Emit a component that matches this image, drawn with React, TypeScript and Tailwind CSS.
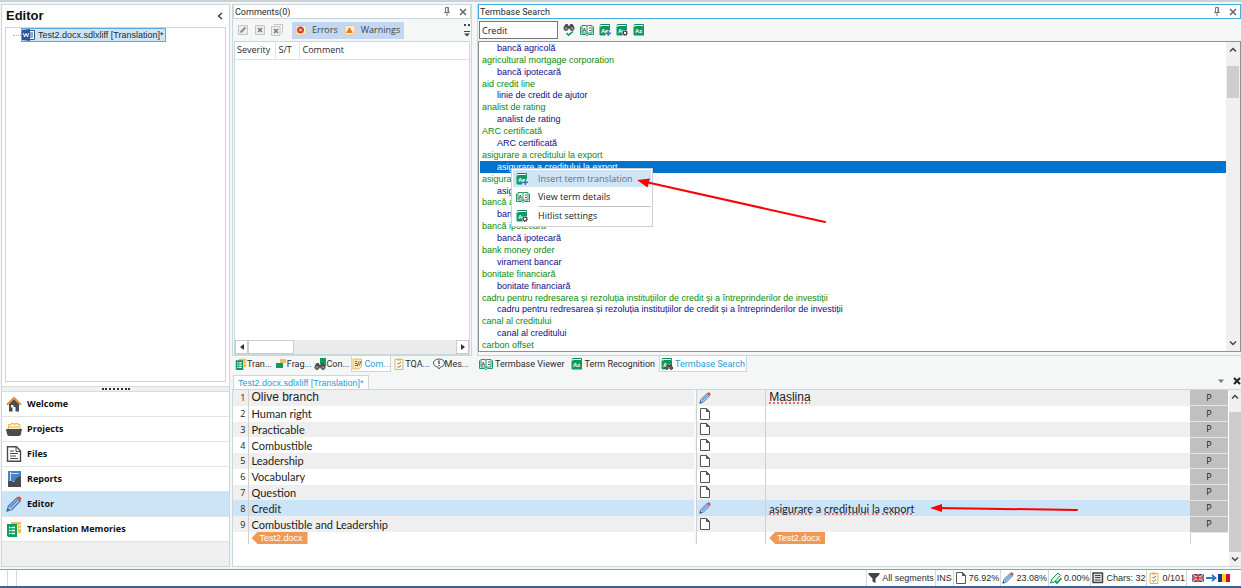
import React from 'react';

type IconProps = { className?: string };

const Pencil = ({ className = 'w-3 h-3' }: IconProps) => (
  <svg viewBox="0 0 16 16" className={className} fill="none">
    <path d="M1 15l1.5-5L11 1.8l3.2 3.2L5.8 13.5z" fill="#b9d2ec" stroke="#3f79bd" strokeWidth="1.3" />
    <path d="M4 11.5L12 3.6" stroke="#3f79bd" strokeWidth="1.3" />
    <path d="M10.6 2.2L12.4.6Q13.5 0 14.6 1.3 16 2.6 15.3 3.6L13.8 5.4z" fill="#d9534a" />
    <path d="M1 15l.8-2.6L3.6 14z" fill="#444" />
  </svg>
);

const Page = ({ className = 'w-3 h-3' }: IconProps) => (
  <svg viewBox="0 0 12 12" className={className} fill="#fff" stroke="#555" strokeWidth="1">
    <path d="M1.5.5h6l3 3v8h-9z" />
    <path d="M7.5.5v3h3z" fill="#555" />
  </svg>
);

const OpenBook = ({ className = 'w-[14px] h-3' }: IconProps) => (
  <svg viewBox="0 0 14 12" className={className} fill="none" stroke="#1b9a63">
    <path d="M.5 2.5v8h5l1.5 1 1.5-1h5v-8" />
    <path d="M2 1.500h4l1 .5 1-.5h4V9H8L7 9.500 6 9H2zM7 2v8" fill="#fff" />
    <path d="M9 4h2M9 6.500h2" stroke="#555" />
    <text x="2.500" y="7.500" fontSize="5" fontWeight="bold" fill="#333" stroke="none" fontFamily="Liberation Sans, sans-serif">A</text>
  </svg>
);

const TermBook = ({ className = 'w-3 h-3', badge }: IconProps & { badge?: 'plus' | 'gear' | 'find' }) => (
  <svg viewBox="0 0 12 12" className={className} fill="none">
    <path d="M1 1.500Q1 .5 2 .5h8.500v2H2.500" stroke="#0c8a55" fill="#fff" />
    <path d="M.5 2.500h10.500v9h-9.500q-1 0-1-1z" fill="#0f9a60" />
    <text x="2" y="9" fontSize="6" fontWeight="bold" fill="#fff" fontFamily="Liberation Sans, sans-serif">Az</text>
    {badge === 'plus' && (
      <g>
        <rect x="6.500" y="6.500" width="5.500" height="5.500" fill="#fff" />
        <path d="M6.500 9.300h5.500M9.300 6.500V12" stroke="#3b74bd" strokeWidth="1.700" />
      </g>
    )}
    {badge === 'gear' && (
      <g>
        <circle cx="9" cy="9" r="3" fill="#fff" />
        <circle cx="9" cy="9" r="1.800" stroke="#444" strokeWidth="1.300" />
        <circle cx="9" cy="9" r="2.600" stroke="#444" strokeWidth=".8" strokeDasharray="1 1" />
      </g>
    )}
    {badge === 'find' && (
      <g>
        <path d="M4 8h8v4H4z" fill="#fff" />
        <path d="M5.500 8l1-1h1v1.500h1.500V7h1l1 1" stroke="#444" strokeWidth="1.200" />
        <circle cx="5.800" cy="10" r="1.400" fill="#777" stroke="#333" />
        <circle cx="10.200" cy="10" r="1.400" fill="#777" stroke="#333" />
      </g>
    )}
  </svg>
);

const Binoculars = ({ className = 'w-3 h-3', tick, book }: IconProps & { tick?: boolean; book?: boolean }) => (
  <svg viewBox="0 0 12 12" className={className} fill="none">
    {book && <path d="M6 0h6v8H8.500L6 5.500z" fill="#0f9a60" />}
    <g transform={tick ? 'translate(0 -1)' : 'translate(0 4)'}>
      <path d="M1 3.500L2.500 1h2.500v1.500h2V1h2.500L11 3.500v2H1z" fill="#555" />
      <circle cx="3" cy="5.300" r="2.100" fill="#888" stroke="#3d3d3d" />
      <circle cx="9" cy="5.300" r="2.100" fill="#888" stroke="#3d3d3d" />
    </g>
    {tick && <path d="M3.500 9l2 2.200L10 7.500" stroke="#0f9a60" strokeWidth="1.600" />}
  </svg>
);

const Memories = ({ className = 'w-3 h-3' }: IconProps) => (
  <svg viewBox="0 0 16 16" className={className} fill="none">
    <path d="M5 1h10v11h-3V4H5z" fill="#efbf55" />
    <path d="M13 4h2M13 7.500h2" stroke="#fff" />
    <path d="M1 3h10v13H3q-2 0-2-2z" fill="#0f9a60" />
    <path d="M3 6.500h6M3 9.500h6M3 12.500h6" stroke="#fff" strokeWidth="1.500" />
    <path d="M5 5v10" stroke="#0f9a60" />
  </svg>
);

const Fragments = () => (
  <svg viewBox="0 0 12 12" className="w-3 h-3">
    <path d="M5 1h6v4H5z" fill="#efbf55" />
    <path d="M1 5h7v5H1z" fill="#0f9a60" />
  </svg>
);

const Note = () => (
  <svg viewBox="0 0 12 12" className="w-3 h-3" fill="none">
    <path d="M1 1h8.500v7.500L7 11H1z" fill="#fbe6b0" stroke="#e7bd5a" />
    <path d="M3 3.500h2M3 5.500h2M3 7.500h3M7 3.500L5.500 7M9.500 3L7 7.500" stroke="#666" />
  </svg>
);

const Clip = () => (
  <svg viewBox="0 0 12 12" className="w-3 h-3" fill="none">
    <path d="M2 1.500h8v10H2z" fill="#fff7e2" stroke="#e5b654" />
    <path d="M4 .5h4v2H4z" fill="#e5b654" />
    <path d="M4.500 5l1 1 2.500-2M4.500 8.500l1 1L8 7.500" stroke="#4a6fa8" />
  </svg>
);

const Message = () => (
  <svg viewBox="0 0 12 12" className="w-3 h-3" fill="none" stroke="#555">
    <path d="M6 1C9 1 11.500 2.500 11.500 5S9 9 7.500 9L6 11 4.800 9C2.500 8.800.5 7.300.5 5s2.500-4 5.500-4z" />
    <path d="M6 2.500v3.500M6 7v1" stroke="#333" strokeWidth="1.200" />
  </svg>
);

const Chevron = ({ dir }: { dir: 'up' | 'down' }) => (
  <svg viewBox="0 0 8 8" className="w-2 h-2" fill="none" stroke="#444" strokeWidth="1.500">
    <path d={dir === 'up' ? 'M1 5.500l3-3 3 3' : 'M1 2.500l3 3 3-3'} />
  </svg>
);

const Pin = () => (
  <svg viewBox="0 0 8 9" className="w-2 h-[9px]" fill="none" stroke="#777">
    <path d="M2.500 5V.5h3V5M5 .5V5M1 5.500h6M4 5.500V9" />
  </svg>
);

const Close = ({ bold }: { bold?: boolean }) => (
  <svg viewBox="0 0 8 8" className="w-2 h-2" fill="none" stroke={bold ? '#222' : '#666'} strokeWidth={bold ? 2 : 1.5}>
    <path d="M1 1l6 6M7 1L1 7" />
  </svg>
);

const navItems = [
  {
    label: 'Welcome',
    icon: (
      <svg viewBox="0 0 16 16" className="w-4 h-4" fill="none">
        <path d="M3 8l5-5 5 5v7.500H9.500V11h-3v4.500H3z" fill="#4b4b4b" />
        <path d="M1 8.800L8 1.800l7 7" stroke="#ec8b3d" strokeWidth="2" />
        <path d="M5 9h2.500v2.500H5z" fill="#fff" />
      </svg>
    ),
  },
  {
    label: 'Projects',
    icon: (
      <svg viewBox="0 0 16 16" className="w-4 h-4" fill="none">
        <path d="M2.500 8V3.500H5v-1h3v1h1v-1h3v1h2V8" fill="#fdf1d2" stroke="#eab951" />
        <path d="M3 6h10" stroke="#eab951" />
        <path d="M0 8h16l-1 5q-.5 2-2 2H3q-1.500 0-2-2z" fill="#4b4b4b" />
      </svg>
    ),
  },
  {
    label: 'Files',
    icon: (
      <svg viewBox="0 0 16 16" className="w-4 h-4" fill="none" stroke="#4b4b4b">
        <path d="M1.500.8h9L14.500 5v10.200h-13z" fill="#fff" strokeWidth="1.400" />
        <path d="M10 1v4.500h4" />
        <path d="M4 5h4M4 7.500h8M4 10h6M4 12.500h8" strokeWidth="1.200" />
      </svg>
    ),
  },
  {
    label: 'Reports',
    icon: (
      <svg viewBox="0 0 16 16" className="w-4 h-4" fill="none">
        <path d="M2 0h13v10H2z" fill="#4a83c4" />
        <path d="M4.500 1v9M4.500 2.500h8" stroke="#cfe0f2" />
        <path d="M2 10h4q1 1.500 3 0 1-4 6-5v11H2z" fill="#4b4b4b" />
      </svg>
    ),
  },
  { label: 'Editor', icon: <Pencil className="w-4 h-4" /> },
  { label: 'Translation Memories', icon: <Memories className="w-4 h-4" /> },
];

const terms = [
  'bancă agricolă',
  'agricultural mortgage corporation',
  'bancă ipotecară',
  'aid credit line',
  'linie de credit de ajutor',
  'analist de rating',
  'analist de rating',
  'ARC certificată',
  'ARC certificată',
  'asigurare a creditului la export',
  'asigurare a creditului la export',
  'asigurare a creditului',
  'asigurare a creditului',
  'bancă agricolă',
  'bancă agricolă',
  'bancă ipotecară',
  'bancă ipotecară',
  'bank money order',
  'virament bancar',
  'bonitate financiară',
  'bonitate financiară',
  'cadru pentru redresarea și rezoluția instituțiilor de credit și a întreprinderilor de investiții',
  'cadru pentru redresarea și rezoluția instituțiilor de credit și a întreprinderilor de investiții',
  'canal al creditului',
  'canal al creditului',
  'carbon offset',
];
const selectedTerm = 10;

const segments = [
  { source: 'Olive branch', target: 'Maslina', arial: true },
  { source: 'Human right' },
  { source: 'Practicable' },
  { source: 'Combustible' },
  { source: 'Leadership' },
  { source: 'Vocabulary' },
  { source: 'Question' },
  { source: 'Credit', target: 'asigurare a creditului la export', active: true },
  { source: 'Combustible and Leadership' },
];

const leftTabs = [
  { label: 'Tran...', icon: <Memories /> },
  { label: 'Frag...', icon: <Fragments /> },
  { label: 'Con...', icon: <Binoculars book /> },
  { label: 'Com...', icon: <Note />, active: true },
  { label: 'TQA...', icon: <Clip /> },
  { label: 'Mes...', icon: <Message /> },
];

const rightTabs = [
  { label: 'Termbase Viewer', icon: <OpenBook /> },
  { label: 'Term Recognition', icon: <TermBook /> },
  { label: 'Termbase Search', icon: <TermBook badge="find" />, active: true },
];

const Sidebar = () => (
  <aside className="w-[229px] shrink-0 flex flex-col border border-[#c9d8dd] bg-white">
    <div className="flex items-center justify-between h-[22px] pl-1 pr-[5px]">
      <h1 className="text-[13px] leading-4 font-bold text-[#111] font-['Liberation_Sans',sans-serif]">Editor</h1>
      <button aria-label="Collapse" className="w-2 h-2">
        <svg viewBox="0 0 8 8" className="w-2 h-2" fill="none" stroke="#333" strokeWidth="1.300">
          <path d="M6 1L2.500 4 6 7" />
        </svg>
      </button>
    </div>
    <div className="flex-1 mx-[3px] mb-1 border border-[#c9d8dd] pl-[7px]">
      <div className="flex items-center">
        <span className="w-2 border-t border-dotted border-[#aaa]" />
        <span className="flex items-center gap-[3px] h-[14px] pr-px border border-[#5ba7dc] bg-[#cde5f7] font-['Liberation_Sans',sans-serif] whitespace-nowrap">
          <svg viewBox="0 0 13 12" className="w-[13px] h-3">
            <path d="M6 1.500h6.500v9H6z" fill="#fff" stroke="#2b579a" />
            <path d="M8 4h3M8 6h3M8 8h3" stroke="#2b579a" />
            <path d="M0 1l8-1v12l-8-1z" fill="#2b579a" />
            <path d="M1.500 4l1 4 1.500-3.500L5.500 8l1-4" stroke="#fff" fill="none" />
          </svg>
          Test2.docx.sdlxliff [Translation]*
        </span>
      </div>
    </div>
    <div className="h-[6px] flex items-center justify-center bg-[#f0f0f0] border-y border-[#d5dfe2]">
      <span className="w-7 border-t-2 border-dotted border-[#333]" />
    </div>
    <nav className="bg-white">
      {navItems.map(item => (
        <button
          key={item.label}
          className={`flex items-center gap-[5px] w-full h-[25px] pl-1 border-b border-[#e4e4e4] font-bold text-[#111] ${item.label === 'Editor' ? 'bg-[#cce4f7]' : 'bg-white'}`}
        >
          {item.icon}
          {item.label}
        </button>
      ))}
    </nav>
    <div className="h-6 bg-[#efefef]" />
  </aside>
);

const PanelTitle = ({ title, active }: { title: string; active?: boolean }) => (
  <div className={`flex items-center gap-2 h-[15px] pl-px pr-[3px] bg-white border ${active ? 'border-[#45aede]' : 'border-[#c9d8dd]'}`}>
    <h2 className="flex-1 font-['Roboto',sans-serif]">{title}</h2>
    <button aria-label={`Pin ${title}`}><Pin /></button>
    <button aria-label={`Close ${title}`}><Close /></button>
  </div>
);

const Tabs = ({ tabs, tight }: { tabs: { label: string; icon: React.ReactNode; active?: boolean }[]; tight?: boolean }) => (
  <>
    {tabs.map(tab => (
      <button
        key={tab.label}
        className={`flex items-center h-4 border border-t-0 whitespace-nowrap font-['Roboto',sans-serif] ${tight ? '' : 'gap-[2px] px-px'} ${tab.active ? 'bg-white border-[#c9d8dd] text-[#1e9bd7]' : 'border-transparent'}`}
      >
        {tab.icon}
        {tab.label}
      </button>
    ))}
  </>
);

const CommentsPanel = () => (
  <section className="w-[240px] shrink-0 flex flex-col border-x border-b border-[#c9d8dd]">
    <PanelTitle title="Comments(0)" />
    <div className="flex items-center h-[22px] pl-1">
      <div className="flex items-center gap-1 pr-1">
        <button aria-label="Edit comment" className="w-[13px] h-3">
          <svg viewBox="0 0 12 12" className="w-3 h-3" fill="none" stroke="#c4c4c4">
            <path d="M1.500 1.500h9v9h-9z" fill="#eee" />
            <path d="M3.500 8.500l5-5" stroke="#888" strokeWidth="2" />
          </svg>
        </button>
        <button aria-label="Delete comment" className="w-[13px] h-3">
          <svg viewBox="0 0 12 12" className="w-3 h-3" fill="none" stroke="#c4c4c4">
            <path d="M1.500 1.500h9v9h-9z" fill="#eee" />
            <path d="M4 4l4 4M8 4L4 8" stroke="#777" strokeWidth="1.500" />
          </svg>
        </button>
        <button aria-label="Delete all comments" className="w-[13px] h-3">
          <svg viewBox="0 0 12 12" className="w-3 h-3" fill="none" stroke="#c4c4c4">
            <path d="M3 .5h8.500V9" />
            <path d="M.5 2.500h8.500v9H.5z" fill="#eee" />
            <path d="M3 5l4 4M7 5L3 9" stroke="#777" strokeWidth="1.500" />
          </svg>
        </button>
      </div>
      <div className="flex items-center h-[17px] pl-[3px] pr-1 ml-1 bg-[#c3d6f2] text-[#444]">
        <button className="flex items-center gap-[5px]">
          <svg viewBox="0 0 12 12" className="w-3 h-3">
            <path d="M1 1.500h10v7L8.500 11H1z" fill="#fdf0d0" stroke="#ecc77a" />
            <circle cx="5.500" cy="6" r="3.500" fill="#d23b34" />
            <path d="M4.200 4.700l2.600 2.600M6.800 4.700L4.200 7.300" stroke="#fff" />
          </svg>
          Errors
        </button>
        <button className="flex items-center gap-[5px] ml-[6px]">
          <svg viewBox="0 0 12 12" className="w-3 h-3">
            <path d="M1 1.500h10v7L8.500 11H1z" fill="#fdf0d0" stroke="#ecc77a" />
            <path d="M5.500 3L9 9H2z" fill="#ee7623" />
          </svg>
          Warnings
        </button>
      </div>
      <svg viewBox="0 0 6 14" className="w-[6px] h-[14px] ml-auto mr-px" fill="#444">
        <path d="M0 1h2v2H0zM4 1h2v2H4zM0 8h6v1H0zM0 10.500h6L3 13.500z" />
      </svg>
    </div>
    <div className="flex-1 flex flex-col mx-px border border-[#c9d8dd] bg-white">
      <table className="w-full table-fixed">
        <thead>
          <tr className="h-[17px] text-left border-b border-[#e3e3e3]">
            <th className="w-10 p-0 pl-[2px] font-normal border-r border-[#e3e3e3]">Severity</th>
            <th className="w-6 p-0 pl-[3px] font-normal border-r border-[#e3e3e3]">S/T</th>
            <th className="p-0 pl-[3px] font-normal">Comment</th>
          </tr>
        </thead>
      </table>
      <div className="flex-1" />
      <div className="flex h-[14px] bg-[#ebebeb]">
        <button aria-label="Scroll left" className="flex items-center justify-center w-[13px] bg-white border border-[#ccc]">
          <svg viewBox="0 0 6 6" className="w-[6px] h-[6px]"><path d="M5 0v6L1 3z" fill="#333" /></svg>
        </button>
        <span className="w-[46px] bg-white border border-[#ccc]" />
        <button aria-label="Scroll right" className="flex items-center justify-center w-[13px] ml-auto bg-white border border-[#ccc]">
          <svg viewBox="0 0 6 6" className="w-[6px] h-[6px]"><path d="M1 0v6l4-3z" fill="#333" /></svg>
        </button>
      </div>
    </div>
  </section>
);

const ContextMenu = () => (
  <div className="absolute left-8 top-[126px]">
    <ul role="menu" className="w-[142px] bg-white border border-[#cfcfcf] p-px text-[#222]">
      <li>
        <button role="menuitem" className="flex items-center gap-2 w-full h-[17px] pl-[3px] bg-[#cde5f7] text-[#6a6f74]">
          <span className="w-[14px]"><TermBook badge="plus" /></span>
          Insert term translation
        </button>
      </li>
      <li>
        <button role="menuitem" className="flex items-center gap-2 w-full h-[19px] pl-[3px]">
          <span className="w-[14px]"><OpenBook /></span>
          View term details
        </button>
      </li>
      <li className="ml-[25px] border-t border-[#c4c4c4]" />
      <li>
        <button role="menuitem" className="flex items-center gap-2 w-full h-[18px] pl-[3px]">
          <span className="w-[14px]"><TermBook badge="gear" /></span>
          Hitlist settings
        </button>
      </li>
    </ul>
    <svg viewBox="0 0 190 50" className="absolute left-[126px] top-2 w-[190px] h-[50px]" fill="#f00">
      <path d="M11 6.500L188 46" stroke="#f00" strokeWidth="2" strokeLinecap="round" />
      <path d="M0 4l13-1.500-2.500 9z" />
    </svg>
  </div>
);

const TermbasePanel = () => (
  <section className="flex-1 min-w-0 flex flex-col border-l border-b border-[#c9d8dd]">
    <PanelTitle title="Termbase Search" active />
    <div className="flex items-center gap-[5px] h-[22px] pl-px">
      <input
        aria-label="Search term"
        defaultValue="Credit"
        className="w-[79px] h-[18px] px-[2px] bg-white border border-[#777] text-[#222]"
      />
      <button aria-label="Search"><Binoculars tick /></button>
      <button aria-label="View term details"><OpenBook /></button>
      <button aria-label="Insert term translation"><TermBook badge="plus" /></button>
      <button aria-label="Hitlist settings"><TermBook badge="gear" /></button>
      <button aria-label="Open termbase"><TermBook /></button>
    </div>
    <div className="relative flex mb-[3px] border border-[#8d9296] bg-white">
      <ul className="flex-1 min-w-0 grid auto-rows-fr h-[309px] pl-px font-['Liberation_Sans',sans-serif] leading-[11px]">
        {terms.map((term, i) => (
          <li
            key={i}
            className={`flex items-center min-h-0 pt-px overflow-hidden whitespace-nowrap ${i % 2 ? 'pl-[2px] text-[#0a8a0a]' : 'pl-[17px]'} ${i === selectedTerm ? 'bg-[#0073d0] text-white' : i % 2 ? '' : 'text-[#0c0c8c]'}`}
          >
            {term}
          </li>
        ))}
      </ul>
      <div className="flex flex-col items-center w-[14px] py-1 bg-[#f0f0f0]">
        <Chevron dir="up" />
        <span className="w-3 h-8 mt-3 bg-[#cdcdcd]" />
        <span className="flex-1" />
        <Chevron dir="down" />
      </div>
      <ContextMenu />
    </div>
  </section>
);

const FileTag = () => (
  <span className="flex items-center w-14 h-3 pl-2 bg-[#ee9a56] text-white font-['Liberation_Sans',sans-serif] [clip-path:polygon(0_50%,6px_0,100%_0,100%_100%,6px_100%)]">
    Test2.docx
  </span>
);

const EditorGrid = () => (
  <div className="flex-1 flex min-h-0 border border-r-0 border-[#c9d8dd] bg-white">
    <div className="flex-1 min-w-0">
      <table className="w-full h-[154px] table-fixed text-[11px] leading-[15px] font-['Lato',sans-serif] text-[#1c1c1c]">
        <colgroup>
          <col className="w-[15px]" />
          <col className="w-[44.8%]" />
          <col className="w-[3px]" />
          <col className="w-[69px]" />
          <col />
          <col className="w-[38px]" />
        </colgroup>
        <tbody>
          {segments.map((s, i) => (
            <tr key={i} className={s.active ? 'bg-[#cce4f7]' : i % 2 ? 'bg-white' : 'bg-[#efefef]'}>
              <td className="p-0 pr-[2px] text-right text-[9px] border-r border-[#d0d0d0] font-['Open_Sans',sans-serif]">{i + 1}</td>
              <td className={`p-0 pl-[3px] ${s.arial ? "text-[12px] font-['Liberation_Sans',sans-serif]" : ''}`}>{s.source}</td>
              <td className="p-0 bg-[#f8f8f8] border-r border-[#d0d0d0]" />
              <td className="p-0 pl-[2px] border-r border-[#d0d0d0]">{s.target ? <Pencil /> : <Page />}</td>
              <td className={`p-0 pl-[3px] ${s.arial ? "text-[12px] font-['Liberation_Sans',sans-serif]" : ''}`}>
                {s.target && (
                  <span className="flex items-center gap-4">
                    <span>
                      {s.target.split(' ').map((word, w) => (
                        <React.Fragment key={w}>
                          {w > 0 && ' '}
                          <span className={word === 'a' ? '' : 'underline decoration-dotted decoration-2 underline-offset-1 decoration-[#ee6a6a]'}>{word}</span>
                        </React.Fragment>
                      ))}
                    </span>
                    {s.active && (
                      <svg viewBox="0 0 148 8" className="w-[148px] h-2" fill="#f00">
                        <path d="M8 4l139 2" stroke="#f00" strokeWidth="2" strokeLinecap="round" />
                        <path d="M0 4l12-4v8z" />
                      </svg>
                    )}
                  </span>
                )}
              </td>
              <td className="p-0 text-center text-[9px] leading-[14px] bg-[#c0c0c0] border-b border-[#e4e4e4] font-['Open_Sans',sans-serif]">P</td>
            </tr>
          ))}
          <tr className="h-3 text-[9px] leading-3">
            <td className="p-0 border-r border-[#d0d0d0]" />
            <td className="p-0 pl-[3px]"><FileTag /></td>
            <td className="p-0 bg-[#f8f8f8] border-r border-[#d0d0d0]" />
            <td className="p-0 border-r border-[#d0d0d0]" />
            <td className="p-0 pl-[3px]"><FileTag /></td>
            <td className="p-0 border-l border-[#d0d0d0]" />
          </tr>
        </tbody>
      </table>
    </div>
    <div className="flex flex-col items-center w-3 ml-px bg-[#f0f0f0]">
      <span className="flex items-center h-[22px] pb-2"><Chevron dir="up" /></span>
      <span className="flex-1 w-full bg-[#cdcdcd]" />
      <span className="flex items-center h-[14px]"><Chevron dir="down" /></span>
    </div>
  </div>
);

const StatusItem = ({ children }: { children: React.ReactNode }) => (
  <span className="flex items-center gap-[2px] px-px border-l border-[#d8d8d8]">{children}</span>
);

const StatusBar = () => (
  <footer className="flex h-[19px] bg-white border-t border-[#7f9fd0] border-b-2 border-b-[#3f5f93] font-['Liberation_Sans',sans-serif]">
    <span className="w-2 border-r border-[#d8d8d8]" />
    <span className="w-[9px] border-r border-[#d8d8d8]" />
    <div className="flex ml-auto pr-[10px]">
      <StatusItem>
        <svg viewBox="0 0 12 12" className="w-3 h-3" fill="#444"><path d="M.5 1h11v1.500L7.500 6.500V11L4.500 9.500v-3l-4-4z" /></svg>
        All segments
      </StatusItem>
      <StatusItem>INS</StatusItem>
      <StatusItem><Page />76.92%</StatusItem>
      <StatusItem><Pencil />23.08%</StatusItem>
      <StatusItem>
        <svg viewBox="0 0 12 12" className="w-3 h-3" fill="none" stroke="#1b9a63">
          <path d="M.5 11L2 7l6-6 2.500 2.500L4.500 10z" fill="#e6f5ee" />
          <path d="M5 9l2 2 4.500-5" strokeWidth="1.800" />
        </svg>
        0.00%
      </StatusItem>
      <StatusItem>
        <svg viewBox="0 0 12 12" className="w-3 h-3" fill="none" stroke="#444">
          <path d="M1 1h9.500v9.500H1z" fill="#ddd" strokeWidth="1.500" />
          <path d="M3 3.500h5.500M3 5.500h5.500M3 8h5.500" />
        </svg>
        Chars: 32
      </StatusItem>
      <StatusItem><Clip />0/101</StatusItem>
      <StatusItem>
        <svg viewBox="0 0 38 10" className="w-[38px] h-[10px] ml-1" fill="none">
          <path d="M0 1h12v8H0z" fill="#23408e" />
          <path d="M0 1l12 8M12 1L0 9" stroke="#fff" strokeWidth="1.200" />
          <path d="M0 1l12 8M12 1L0 9" stroke="#d22" strokeWidth=".5" />
          <path d="M6 1v8M0 5h12" stroke="#fff" strokeWidth="2.400" />
          <path d="M6 1v8M0 5h12" stroke="#d22" strokeWidth="1.600" />
          <path d="M14 5h9M20 2l3.500 3L20 8" stroke="#2f78c2" strokeWidth="1.800" />
          <path d="M26 1h4v8h-4z" fill="#16389c" />
          <path d="M30 1h4v8h-4z" fill="#fcd116" />
          <path d="M34 1h4v8h-4z" fill="#ce1126" />
        </svg>
      </StatusItem>
    </div>
  </footer>
);

export default function App() {
  return (
    <div className="flex flex-col min-h-screen bg-[#f5f6f6] border-t-2 border-[#c9d3d6] text-[9px] leading-3 font-['Open_Sans',sans-serif] text-[#2a2a2a]">
      <div className="flex-1 flex gap-[2px] pl-px pt-[2px] pb-[2px]">
        <Sidebar />
        <main className="flex-1 min-w-0 flex flex-col">
          <div className="flex gap-[5px]">
            <CommentsPanel />
            <TermbasePanel />
          </div>
          <div className="flex gap-[5px]">
            <div className="flex justify-between w-[240px] px-[2px] shrink-0"><Tabs tabs={leftTabs} tight /></div>
            <div className="flex gap-[2px]"><Tabs tabs={rightTabs} /></div>
          </div>
          <div className="flex items-end justify-between h-[17px]">
            <button className="h-[14px] px-1 ml-px bg-white border border-b-0 border-[#c9d8dd] font-['Liberation_Sans',sans-serif] text-[#1e9bd7]">
              Test2.docx.sdlxliff [Translation]*
            </button>
            <div className="flex items-center gap-2 h-4">
              <button aria-label="Open documents">
                <svg viewBox="0 0 8 8" className="w-2 h-2"><path d="M1 2.500h6L4 6z" fill="#777" /></svg>
              </button>
              <button aria-label="Close document"><Close bold /></button>
            </div>
          </div>
          <EditorGrid />
        </main>
      </div>
      <StatusBar />
    </div>
  );
}
